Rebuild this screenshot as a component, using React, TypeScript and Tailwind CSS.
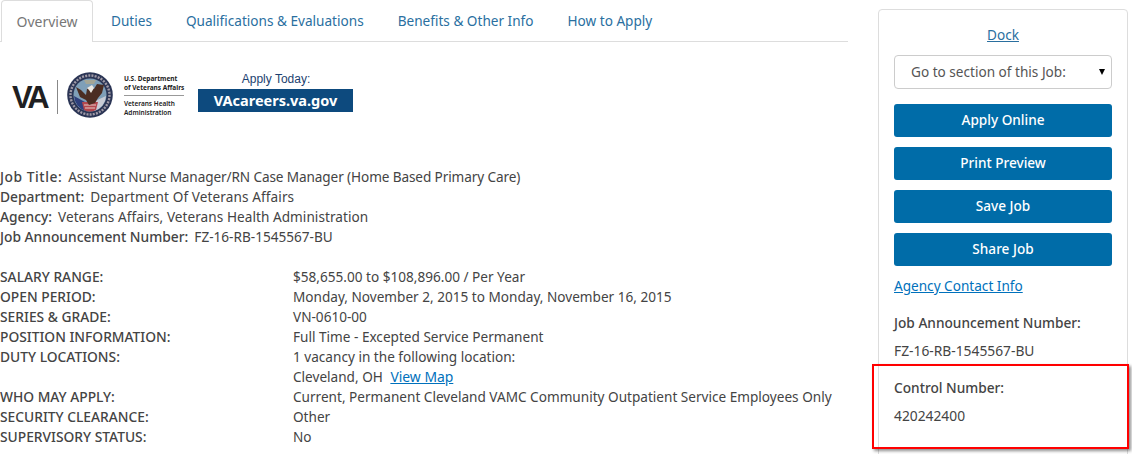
import React from 'react';

const font = { fontFamily: '"Noto Sans", "Open Sans", sans-serif' };

const tabs = ['Duties', 'Qualifications & Evaluations', 'Benefits & Other Info', 'How to Apply'];

const summary = [
  { label: 'Job Title:', value: 'Assistant Nurse Manager/RN Case Manager (Home Based Primary Care)', labelClass: 'tracking-[0.55px]', valueClass: 'tracking-[-0.11px]' },
  { label: 'Department:', value: 'Department Of Veterans Affairs', labelClass: '', valueClass: 'tracking-[0.1px]' },
  { label: 'Agency:', value: 'Veterans Affairs, Veterans Health Administration', labelClass: '', valueClass: 'tracking-[0.05px]' },
  { label: 'Job Announcement Number:', value: 'FZ-16-RB-1545567-BU', labelClass: '', valueClass: '' },
];

const details: { label: string; value: React.ReactNode }[] = [
  { label: 'SALARY RANGE:', value: '$58,655.00 to $108,896.00 / Per Year' },
  { label: 'OPEN PERIOD:', value: 'Monday, November 2, 2015 to Monday, November 16, 2015' },
  { label: 'SERIES & GRADE:', value: 'VN-0610-00' },
  { label: 'POSITION INFORMATION:', value: 'Full Time - Excepted Service Permanent' },
  {
    label: 'DUTY LOCATIONS:',
    value: (
      <>
        <div>1 vacancy in the following location:</div>
        <div>
          Cleveland, OH <a className="ml-[4px] text-[13.9px] text-[#0071bc] underline">View Map</a>
        </div>
      </>
    ),
  },
  { label: 'WHO MAY APPLY:', value: 'Current, Permanent Cleveland VAMC Community Outpatient Service Employees Only' },
  { label: 'SECURITY CLEARANCE:', value: 'Other' },
  { label: 'SUPERVISORY STATUS:', value: 'No' },
];

const buttons = ['Apply Online', 'Print Preview', 'Save Job', 'Share Job'];

const Seal = () => (
  <svg width="46" height="46" viewBox="0 0 46 46" className="shrink-0">
    <circle cx="23" cy="23" r="22.8" fill="#2b3555" />
    <circle cx="23" cy="23" r="19.5" fill="none" stroke="#a09aa6" strokeWidth="2.4" strokeDasharray="2 1.2" />
    <circle cx="23" cy="23" r="16.5" fill="#7f9fb8" />
    <path d="M7 24 L18 30 L19 39 A16.5 16.5 0 0 1 7 24Z" fill="#2f3f7c" />
    <path d="M39 24 L28 29 L27 39 A16.5 16.5 0 0 0 39 24Z" fill="#c9ccd6" />
    <path d="M15 30 L31 30 L29 38 Q23 41 17 38Z" fill="#b4474e" />
    <path d="M17 33 L29 33 M18 36 L28 36" stroke="#e8dcd6" strokeWidth="0.9" />
    <path d="M9 15 L14 18 L19 23 L20 17 L24 14 L27 17 L30 12 L37 13 L35 21 L31 26 L28 31 L22 33 L19 28 L13 25Z" fill="#4b2d22" />
    <path d="M20 16 L25 13 L27 16 L24 21 L22 18Z" fill="#ede9e2" />
    <path d="M17 8 L29 8 L27 12 L19 12Z" fill="#b5a988" opacity="0.7" />
  </svg>
);

const Logo = () => (
  <div className="ml-[12px] mt-[30px] flex h-[46px] items-center">
    <span
      className="w-[37px] pt-[4px] text-[31px] font-bold leading-none tracking-[-3.2px] text-[#1f1f22]"
      style={{ fontFamily: '"Liberation Sans", sans-serif' }}
    >
      VA
    </span>
    <span className="ml-[8px] mt-[4px] h-[34px] w-px bg-[#888]" />
    <span className="ml-[9px]">
      <Seal />
    </span>
    <div className="ml-[11px] w-[60px] pt-[1px] text-[6.5px] font-bold leading-[9px] text-[#222]">
      <div className="whitespace-nowrap">U.S. Department</div>
      <div className="whitespace-nowrap">of Veterans Affairs</div>
      <div className="mb-[3px] mt-[3px] h-px bg-[#999]" />
      <div className="whitespace-nowrap font-semibold">Veterans Health</div>
      <div className="whitespace-nowrap font-semibold">Administration</div>
    </div>
    <div className="ml-[14px] flex w-[155px] flex-col items-center self-start">
      <span
        className="pl-[1px] text-[12px] leading-[15px] text-[#1c3f70]"
        style={{ fontFamily: '"Liberation Sans", sans-serif' }}
      >
        Apply Today:
      </span>
      <span className="mt-[2px] flex h-[23px] w-full items-center justify-center bg-[#0d4a7e] text-[14.5px] font-bold text-white">
        VAcareers.va.gov
      </span>
    </div>
  </div>
);

export default function App() {
  return (
    <div className="relative flex h-[454px] w-[1132px] overflow-hidden bg-white text-[13.6px] text-[#444]" style={font}>
      <div className="w-[848px] shrink-0">
        <div className="flex h-[42px] border-b border-[#ddd] pl-px">
          <div className="h-[42px] w-[92px] rounded-t border border-b-0 border-[#ddd] bg-white pt-[10px] text-center text-[14px] text-[#777]">
            Overview
          </div>
          <div className="flex gap-[34px] pl-[18px] pt-[11px] text-[#2a6f9f]">
            {tabs.map((tab) => (
              <a key={tab} className="whitespace-nowrap">
                {tab}
              </a>
            ))}
          </div>
        </div>

        <Logo />

        <div className="mt-[49px] leading-[20px]">
          {summary.map((row) => (
            <div key={row.label}>
              <span className={`text-[13.8px] font-medium ${row.labelClass}`}>{row.label}</span>
              <span className={`ml-[6px] ${row.valueClass}`}>{row.value}</span>
            </div>
          ))}
        </div>

        <div className="mt-[20px] leading-[20px]">
          {details.map((row) => (
            <div key={row.label} className="flex">
              <div className="w-[293px] shrink-0 text-[13.8px] font-medium">{row.label}</div>
              <div>{row.value}</div>
            </div>
          ))}
        </div>
      </div>

      <aside className="ml-[30px] mt-[9px] h-[500px] w-[250px] shrink-0 rounded border border-[#ddd] px-[15px] pt-[15px]">
        <a className="block text-center leading-[20px] text-[#2a6f9f] underline">Dock</a>
        <div className="relative mt-[10px] flex h-[34px] items-center rounded border border-[#ccc] pl-[16px] text-[#555]">
          Go to section of this Job:
          <span className="absolute right-[6px] top-[13px] h-0 w-0 border-x-[3.5px] border-t-[6px] border-x-transparent border-t-black" />
        </div>
        <div className="mt-[15px] flex flex-col gap-[10px]">
          {buttons.map((label) => (
            <div key={label} className="flex h-[33px] items-center justify-center rounded-[3px] bg-[#006ca8] font-medium text-white">
              {label}
            </div>
          ))}
        </div>
        <a className="mt-[10px] block leading-[20px] text-[#0071bc] underline">Agency Contact Info</a>
        <div className="mt-[17px] text-[13.7px] font-medium leading-[20px]">Job Announcement Number:</div>
        <div className="mt-[8px] text-[13.8px] leading-[20px]">FZ-16-RB-1545567-BU</div>
        <div className="mt-[17px] text-[13.7px] font-medium leading-[20px]">Control Number:</div>
        <div className="mt-[8px] text-[13.8px] leading-[20px]">420242400</div>
      </aside>

      {/* Red annotation box */}
      <div className="absolute left-[872px] top-[364px] h-[85px] w-[257px] border-[2px] border-[#f00] shadow-[2px_2px_3px_rgba(0,0,0,0.45)]" />
    </div>
  );
}
